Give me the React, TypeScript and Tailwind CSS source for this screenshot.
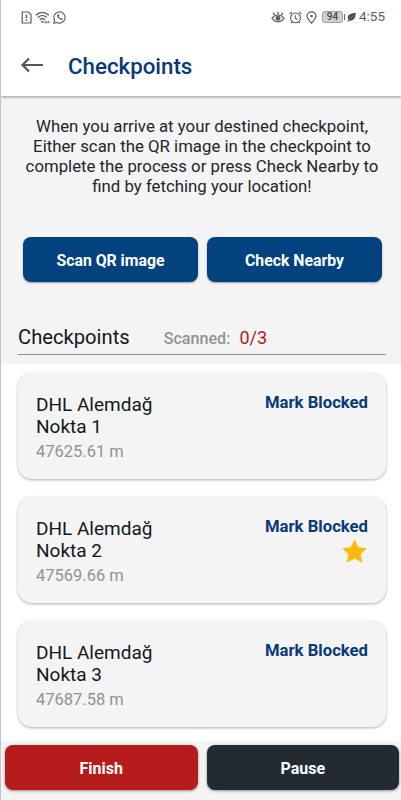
import React from "react";

type Checkpoint = {
  name: string;
  point: string;
  distance: string;
  starred?: boolean;
};

const checkpoints: Checkpoint[] = [
  { name: "DHL Alemdağ", point: "Nokta 1", distance: "47625.61 m" },
  { name: "DHL Alemdağ", point: "Nokta 2", distance: "47569.66 m", starred: true },
  { name: "DHL Alemdağ", point: "Nokta 3", distance: "47687.58 m" },
];

function StatusBar() {
  return (
    <div className="relative z-20 flex h-[34px] shrink-0 items-center justify-between bg-white pl-[20px] pr-[16px] text-[#5c5c5c]">
      <div className="flex items-center gap-[3px]">
        {/* SIM alert */}
        <svg width="11" height="13" viewBox="0 0 11 13" fill="none" stroke="currentColor" strokeWidth="1.2">
          <path d="M1.2 1h5.900L10 3.600V12H1.200z" />
          <path d="M5.500 3.400v3.900M5.500 8.500v1.400" strokeWidth="1.500" />
        </svg>
        {/* Wifi */}
        <svg width="15" height="13" viewBox="0 0 15 13" fill="none" stroke="currentColor" strokeWidth="1.3">
          <path d="M.8 4.200c3.800-3.700 9.200-3.700 13 0M2.800 6.500c2.700-2.600 6.300-2.600 9 0M4.800 8.800c1.600-1.600 3.600-1.600 5.200 0" />
          <path d="M6.200 10.300l1.300 1.700 1.300-1.700zM11 9.900l-1.200 1.300 1.200 1.300M13 9.900l1.200 1.300-1.200 1.300M10 11.200h4" strokeWidth="0.800" />
        </svg>
        {/* WhatsApp */}
        <svg width="13" height="13" viewBox="0 0 13 13" fill="none" stroke="currentColor" strokeWidth="1.1">
          <path d="M.8 12.200l.8-3A5.600 5.600 0 1 1 3.800 11.400z" />
          <path d="M4.500 3.400c-1.700 1.500 2.700 6.500 5 5 .5-.5.300-.9-.2-1.200-.9-.500-1 .2-1.400.3-.8-.2-1.900-1.400-2-2.100.3-.4.700-.6.300-1.200-.3-.8-.8-1.200-1.700-.8z" fill="currentColor" stroke="none" />
        </svg>
      </div>
      <div className="flex items-center">
        {/* Eye comfort */}
        <svg width="14" height="12" viewBox="0 0 14 12" fill="none" stroke="currentColor" strokeWidth="1.2">
          <path d="M1 7.200c3.300-4.300 8.700-4.300 12 0-3.300 4.800-8.700 4.800-12 0z" />
          <circle cx="7" cy="7.200" r="1.900" fill="currentColor" />
          <path d="M7 3.300V.8M3.700 4L2 1.900M10.300 4L12 1.900" />
        </svg>
        {/* Alarm */}
        <svg className="ml-[4px]" width="13" height="13" viewBox="0 0 13 13" fill="none" stroke="currentColor" strokeWidth="1.100">
          <circle cx="6.500" cy="6.900" r="4.900" />
          <path d="M6.300 4.300v2.800l2 1.400M.8 3.200L3 .9M12.200 3.200L10 .9M3.200 10.800L2 12.200M9.800 10.800L11 12.200" />
        </svg>
        {/* Location */}
        <svg className="ml-[4px]" width="11" height="13" viewBox="0 0 11 13" fill="none" stroke="currentColor" strokeWidth="1.200">
          <path d="M5.500 12.200C3.500 9.700 1 7.600 1 5.100a4.500 4.300 0 0 1 9 0c0 2.500-2.500 4.600-4.500 7.100z" />
          <circle cx="5.500" cy="5" r="1.300" fill="currentColor" stroke="none" />
        </svg>
        {/* Battery */}
        <div className="ml-[5px] flex h-[12px] w-[21px] items-center justify-center rounded-[3px] border border-[#a0a0a0] bg-[#d0d0d0] text-[10px] font-medium leading-none text-[#444]">
          94
        </div>
        <div className="ml-[1px] h-[6px] w-[1px] bg-[#666]" />
        {/* Power saving leaf */}
        <svg className="ml-[2px]" width="9" height="10" viewBox="0 0 9 10">
          <path d="M8.700.8C4.500 1.200 1 2.500.8 5.600c0 1 .2 1.600.7 2.200L.2 9.300l.7.500 1.300-1.400C6.400 9.600 8.800 6 8.700.8z" fill="#4a4a4a" />
          <path d="M2 7.700L6.500 3.300" stroke="#bbb" strokeWidth="0.500" />
        </svg>
        <span className="ml-[3px] text-[13.500px] leading-none">4:55</span>
      </div>
    </div>
  );
}

function CheckpointCard({ checkpoint }: { checkpoint: Checkpoint }) {
  return (
    <div className="flex h-[106px] shrink-0 justify-between rounded-[14px] bg-[#f4f4f4] pl-[18px] pr-[18px] pt-[20px] shadow-[0_1px_3px_rgba(0,0,0,0.32)]">
      <div className="pt-[1px]">
        <p className="text-[19px] leading-[22px] text-[#101920]">
          {checkpoint.name}
          <br />
          {checkpoint.point}
        </p>
        <p className="mt-[3px] text-[16.500px] leading-[22px] text-[#929292]">{checkpoint.distance}</p>
      </div>
      <div className="flex flex-col items-end">
        <button className="text-[16.700px] font-bold leading-[20px] text-[#083a78]">Mark Blocked</button>
        {checkpoint.starred && (
          <svg className="mr-[1px] mt-[2px]" width="25" height="24" viewBox="0 0 25 24">
            <path
              d="M12.500 1l3.600 7.500 8.100 1-5.900 5.700 1.500 8-7.300-3.900-7.300 3.900 1.500-8L.8 9.500l8.100-1z"
              fill="#fdb90b"
              stroke="#fdb90b"
              strokeWidth="0.600"
              strokeLinejoin="round"
            />
          </svg>
        )}
      </div>
    </div>
  );
}

export default function App() {
  return (
    <div className="flex h-[800px] w-[401px] flex-col overflow-hidden border-l border-[#c4c4c4] bg-white font-[Roboto,sans-serif]">
      <StatusBar />

      {/* Header */}
      <header className="z-10 flex h-[62px] shrink-0 items-center bg-white pl-[20px] shadow-[0_1px_3px_rgba(0,0,0,0.4)]">
        <svg width="22" height="16" viewBox="0 0 22 16" fill="none" stroke="#55565a" strokeWidth="2.200">
          <path d="M8 1.500L1.500 8 8 14.500M1.500 8H22" />
        </svg>
        <h1 className="ml-[25px] pt-[3px] text-[22.300px] font-medium text-[#083a78]">Checkpoints</h1>
      </header>

      {/* Intro */}
      <section className="flex h-[268px] shrink-0 flex-col bg-[#f4f4f4] pl-[17px] pr-[15px] pt-[20px]">
        <p className="whitespace-nowrap text-center text-[16.800px] leading-[20px] text-[#1c262c]">
          When you arrive at your destined checkpoint,
          <br />
          Either scan the QR image in the checkpoint to
          <br />
          complete the process or press Check Nearby to
          <br />
          find by fetching your location!
        </p>

        <div className="mt-[41px] flex gap-[9px] pl-[5px] pr-[4px]">
          <button className="h-[45px] flex-1 rounded-[8px] bg-[#02427f] pt-[2px] text-[15.800px] font-bold text-white shadow-[0_1px_2px_rgba(0,0,0,0.35)]">
            Scan QR image
          </button>
          <button className="h-[45px] flex-1 rounded-[8px] bg-[#02427f] pt-[2px] text-[15.800px] font-bold text-white shadow-[0_1px_2px_rgba(0,0,0,0.35)]">
            Check Nearby
          </button>
        </div>

        <div className="mt-[42px] flex h-[31px] items-baseline border-b border-[#8a8f8f]">
          <h2 className="text-[20.200px] leading-[24px] text-[#101920]">Checkpoints</h2>
          <span className="ml-[34px] text-[16.100px] font-medium text-[#929292]">Scanned:</span>
          <span className="ml-[9px] text-[18px] text-[#b51a1a]">0/3</span>
        </div>
      </section>

      {/* Checkpoint list */}
      <main className="flex min-h-0 flex-1 flex-col gap-[18px] overflow-hidden pl-[17px] pr-[15px] pt-[9px]">
        {checkpoints.map((checkpoint) => (
          <CheckpointCard key={checkpoint.point} checkpoint={checkpoint} />
        ))}
      </main>

      {/* Actions */}
      <footer className="flex h-[59px] shrink-0 gap-[9px] bg-[#f4f4f4] pl-[4px] pr-[2px] pt-[4px]">
        <button className="h-[45px] flex-1 rounded-[8px] bg-[#b71c1c] pt-[2px] text-[16px] font-bold text-white shadow-[0_1px_3px_rgba(0,0,0,0.4)]">
          Finish
        </button>
        <button className="h-[45px] flex-1 rounded-[8px] bg-[#222b31] pt-[2px] text-[16px] font-bold text-white shadow-[0_1px_3px_rgba(0,0,0,0.4)]">
          Pause
        </button>
      </footer>
    </div>
  );
}
